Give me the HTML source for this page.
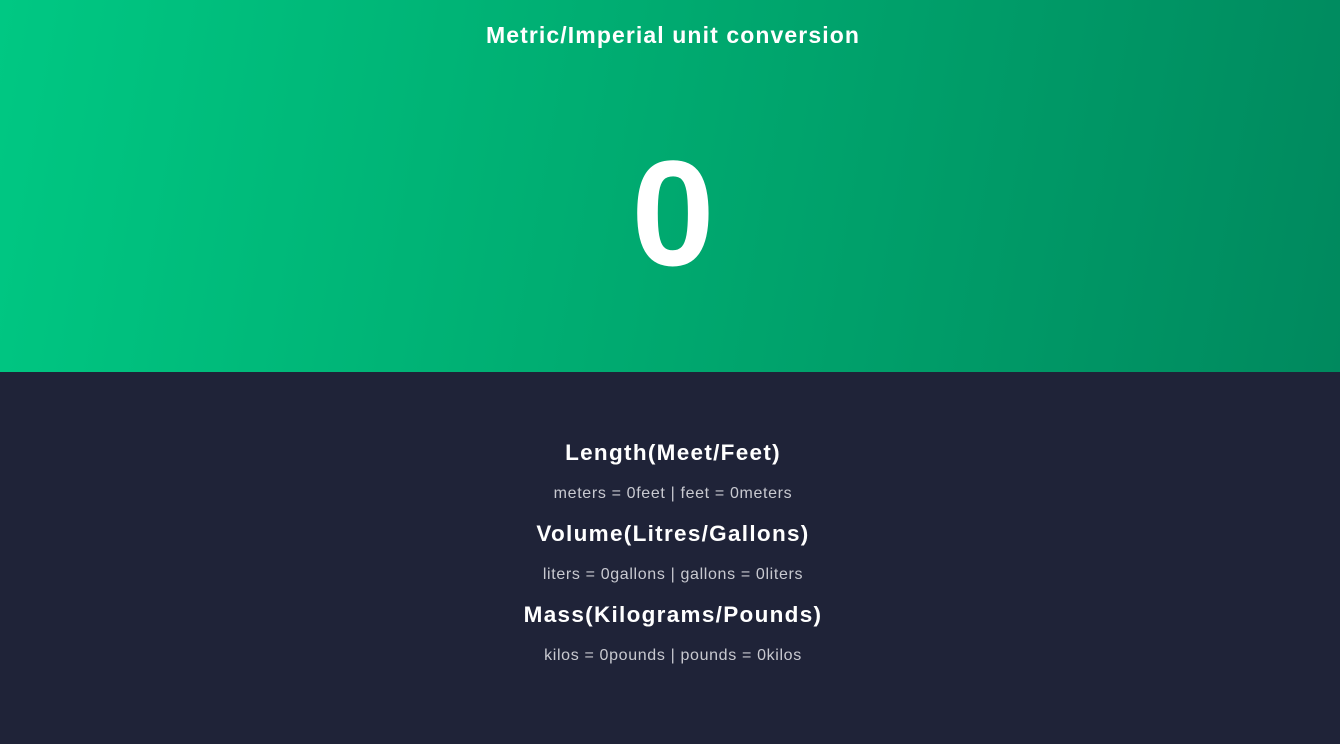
<!DOCTYPE html>
<html><head><style>
body{margin:0;width:1340px;height:744px;font-family:"Liberation Sans",sans-serif;background:#1f2338;overflow:hidden}
.top{height:372px;background:linear-gradient(100deg,#00c883 0%,#00a96f 50%,#00895e 100%);position:relative;color:#fff;text-align:center}
.top h1{margin:0;position:absolute;top:22px;left:6px;right:0;font-size:23px;font-weight:bold;letter-spacing:1.1px}
.num{position:absolute;top:128px;left:6px;right:0;font-size:150px;font-weight:bold;line-height:170px}
.bot{text-align:center;color:#fff}
h2{margin:0;font-size:22.5px;font-weight:bold;position:absolute;left:6px;right:0;text-align:center;letter-spacing:1.3px}
p{margin:0;font-size:16px;color:#c8c9d0;position:absolute;left:6px;right:0;text-align:center;letter-spacing:0.65px}
</style></head><body>
<div class="top"><h1>Metric/Imperial unit conversion</h1><div class="num">0</div></div>
<div class="bot">
<h2 style="top:440px">Length(Meet/Feet)</h2>
<p style="top:485px">meters = 0feet | feet = 0meters</p>
<h2 style="top:521px">Volume(Litres/Gallons)</h2>
<p style="top:566px">liters = 0gallons | gallons = 0liters</p>
<h2 style="top:602px">Mass(Kilograms/Pounds)</h2>
<p style="top:647px">kilos = 0pounds | pounds = 0kilos</p>
</div>
</body></html>
